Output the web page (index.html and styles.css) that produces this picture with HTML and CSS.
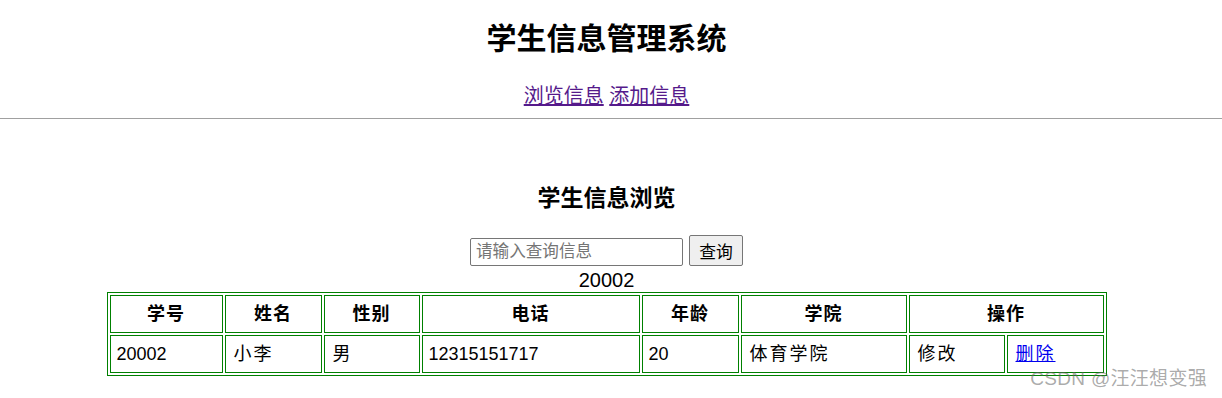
FILE: index.html
```html
<!DOCTYPE html>
<html lang="zh-CN">
<head>
<meta charset="utf-8">
<title>学生信息管理系统</title>
<link rel="stylesheet" href="styles.css">
</head>
<body>
<div class="page">
  <h2 class="title">学生信息管理系统</h2>
  <div class="nav"><a href="#" class="visited">浏览信息</a> <a href="#" class="visited">添加信息</a></div>
</div>
<hr class="rule">
<div class="page">
  <h3 class="subtitle">学生信息浏览</h3>
  <form class="search">
    <input class="search-input" type="text" placeholder="请输入查询信息">
    <button class="search-btn" type="button">查询</button>
  </form>
  <div class="query">20002</div>
  <table class="grid">
    <colgroup>
      <col class="c1"><col class="c2"><col class="c3"><col class="c4"><col class="c5"><col class="c6"><col class="c7"><col class="c8">
    </colgroup>
    <tr>
      <th>学号</th><th>姓名</th><th>性别</th><th>电话</th><th>年龄</th><th>学院</th><th colspan="2">操作</th>
    </tr>
    <tr>
      <td>20002</td><td class="cjk">小李</td><td class="cjk">男</td><td>12315151717</td><td>20</td><td class="cjk">体育学院</td><td class="cjk">修改</td><td class="cjk"><a href="#" class="link">删除</a></td>
    </tr>
  </table>
</div>
<div class="watermark">CSDN @汪汪想变强</div>
</body>
</html>
```
FILE: styles.css
```css
html, body {
  margin: 0;
  padding: 0;
  background: #fff;
}
body {
  font-family: "Liberation Sans", "Noto Sans CJK SC", sans-serif;
  font-size: 20px;
  color: #000;
  position: relative;
  height: 398px;
  overflow: hidden;
}
.page {
  width: 1213px;
  text-align: center;
}
.title {
  margin: 19px 0 0;
  font-size: 30px;
  line-height: 40px;
  font-weight: bold;
}
.nav {
  margin-top: 23px;
  line-height: 28px;
  font-size: 20px;
}
.nav a.visited {
  color: #551a8b;
  text-decoration: underline;
}
.rule {
  margin: 8px 0 0;
  border: 0;
  border-top: 1px solid #a0a0a0;
  height: 0;
}
.subtitle {
  margin: 64px 0 0;
  font-size: 23px;
  line-height: 30px;
  font-weight: bold;
}
.search {
  margin: 22px 0 0;
  display: flex;
  justify-content: center;
  align-items: flex-end;
  gap: 6px;
}
.search-input {
  box-sizing: border-box;
  width: 213px;
  height: 28px;
  margin: 0;
  padding: 1px 5px;
  border: 1px solid #767676;
  border-radius: 2px;
  font-family: "Liberation Sans", "Noto Sans CJK SC", sans-serif;
  font-size: 16.6px;
  color: #000;
}
.search-input::placeholder {
  color: #757575;
}
.search-btn {
  box-sizing: border-box;
  width: 54px;
  height: 31px;
  margin: 0;
  padding: 0;
  border: 1px solid #767676;
  border-radius: 2px;
  background: #efefef;
  font-family: "Liberation Sans", "Noto Sans CJK SC", sans-serif;
  font-size: 16.8px;
  color: #000;
}
.query {
  line-height: 24px;
  font-size: 20px;
  margin-top: 2px;
}
.grid {
  width: 1000px;
  margin: 0 auto;
  table-layout: fixed;
  border-collapse: separate;
  border-spacing: 2px;
  border: 1px solid #008000;
  font-family: "Liberation Sans", "Noto Sans CJK SC", sans-serif;
  font-size: 18px;
}
.c1 { width: 113px; }
.c2 { width: 97px; }
.c3 { width: 96px; }
.c4 { width: 218px; }
.c5 { width: 97px; }
.c6 { width: 166px; }
.c7 { width: 96px; }
.c8 { width: 97px; }
.grid th, .grid td {
  border: 1px solid #008000;
  padding: 0 6px;
  line-height: 36px;
  height: 36px;
  white-space: nowrap;
}
.grid th {
  text-align: center;
  font-weight: bold;
  letter-spacing: 1px;
}
.grid td {
  text-align: left;
  font-weight: normal;
}
.grid td.cjk {
  padding-left: 8px;
  letter-spacing: 2px;
}
.link {
  color: #0000ee;
  text-decoration: underline;
}
.watermark {
  position: absolute;
  right: 15px;
  top: 367px;
  font-size: 19px;
  line-height: 24px;
  color: rgba(100, 100, 100, 0.55);
  letter-spacing: 0.3px;
}
```
